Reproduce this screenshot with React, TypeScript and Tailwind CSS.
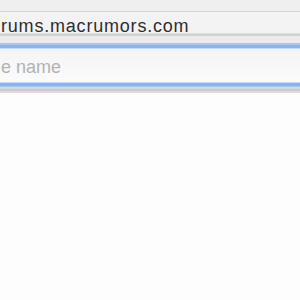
import React from "react";

export default function App() {
  return (
    <div className="w-[300px] h-[300px] bg-[#fdfdfd] flex flex-col overflow-hidden" style={{ fontFamily: '"Liberation Sans", Arial, sans-serif' }}>
      <div className="h-[11px] bg-[#efefef]" />
      <div className="h-[1px] bg-[#d4d4d4]" />
      <div className="h-[21px] bg-[#f3f3f3] pt-[8px] pl-[1px]">
        <div className="text-[18px] leading-[13px] tracking-[0.8px] text-[#2e2e2e] whitespace-nowrap">rums.macrumors.com</div>
      </div>
      <div className="h-[1px] bg-[#dedede]" />
      <div className="h-[2px] bg-[#d2d2d2]" />
      <div className="h-[7px] bg-[#ebebeb]" />
      <div className="h-[2px] bg-[#a9c8f0]" />
      <div className="h-[3px] bg-[#8ab5ec]" />
      <div className="h-[1px] bg-[#c6dbf6]" />
      <div className="h-[33px] bg-gradient-to-b from-[#f4f4f4] to-[#fbfbfb] pt-[9px] pl-[1px]">
        <div className="text-[18px] leading-[18px] text-[#b3b3b3] whitespace-nowrap">e name</div>
      </div>
      <div className="h-[1px] bg-[#c6dbf6]" />
      <div className="h-[3px] bg-[#8ab5ec]" />
      <div className="h-[1px] bg-[#a9c8f0]" />
      <div className="h-[2px] bg-[#d8d8d8]" />
      <div className="h-[2px] bg-[#c9c9c9]" />
      <div className="h-[2px] bg-[#dcdcdc]" />
      <div className="flex-1 bg-[#fdfdfd]" />
    </div>
  );
}
